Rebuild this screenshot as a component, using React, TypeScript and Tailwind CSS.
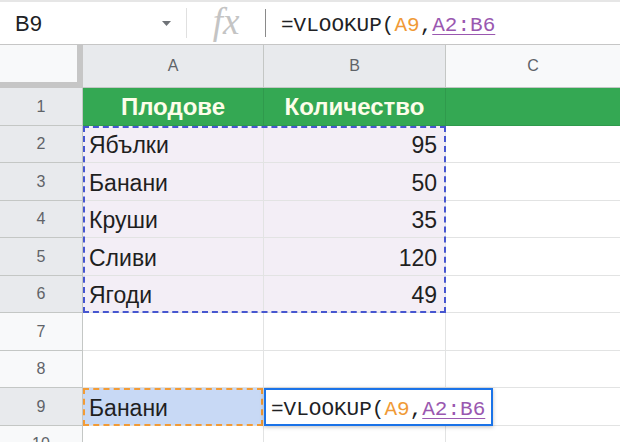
import React from 'react';

// one row of the sheet: number, cell A, cell B
type Row = {
  n: number;
  a?: string;
  b?: string;
  head?: boolean;
  range?: boolean;
  lookup?: boolean;
};

const rows: Row[] = [
  { n: 1, a: 'Плодове', b: 'Количество', head: true },
  { n: 2, a: 'Ябълки', b: '95', range: true },
  { n: 3, a: 'Банани', b: '50', range: true },
  { n: 4, a: 'Круши', b: '35', range: true },
  { n: 5, a: 'Сливи', b: '120', range: true },
  { n: 6, a: 'Ягоди', b: '49', range: true },
  { n: 7 },
  { n: 8 },
  { n: 9, a: 'Банани', lookup: true },
  { n: 10 },
];

// the formula with its coloured references
const Formula = () => (
  <span className="font-['Liberation_Mono',monospace] text-[21px] leading-none text-[#202124] whitespace-nowrap">
    =VLOOKUP(<span className="text-[#f09a36]">A9</span>,
    <span className="text-[#9a58b0] underline decoration-1 underline-offset-[3px]">A2:B6</span>
  </span>
);

const FormulaBar = () => (
  <div className="h-[45px] flex items-center border-t-2 border-[#e6e6e6] border-b border-b-[#c6c6c6] bg-white">
    <div className="w-[186px] flex items-center justify-between pl-[15px] pr-[15px]">
      <span className="text-[22px] text-[#202124]">B9</span>
      <svg width="9" height="5" viewBox="0 0 9 5">
        <path d="M0 0 L9 0 L4.5 5 Z" fill="#6f7378" />
      </svg>
    </div>
    <div className="w-px h-[30px] bg-[#e0e0e0]" />
    <div className="w-[78px] flex items-center justify-center">
      <span className="font-['Liberation_Serif',serif] italic text-[37px] leading-none text-[#c4c4c4] -mt-[4px]">fx</span>
    </div>
    <div className="w-px h-[28px] bg-[#8a8a8a]" />
    <div className="pl-[15px] translate-y-[3px]">
      <Formula />
    </div>
  </div>
);

const ColumnHeader = () => (
  <div className="flex h-[43px] text-[16px] text-[#5f6368]">
    <div className="w-[83px] bg-[#f8f9fa] border-r-[6px] border-b-[6px] border-[#c6c6c6]" />
    <div className="w-[181px] bg-[#e8eaed] border-r border-b border-[#c4c7c5] flex items-center justify-center">A</div>
    <div className="w-[182px] bg-[#e8eaed] border-r border-b border-[#c4c7c5] flex items-center justify-center">B</div>
    <div className="flex-1 bg-[#f8f9fa] border-b border-[#c4c7c5] flex items-center justify-center">C</div>
  </div>
);

const SheetRow = ({ row, i }: { row: Row; i: number }) => {
  const h = i % 2 === 0 ? 'h-[38px]' : 'h-[37px]';
  const marked = row.head || row.range || row.lookup;
  const line = row.head ? 'border-[#2f9a4c]' : 'border-[#e2e3e3]';

  let aBg = 'bg-white';
  if (row.head) aBg = 'bg-[#34a853]';
  else if (row.range) aBg = 'bg-[#f3eef6]';
  else if (row.lookup) aBg = 'bg-[#c8d9f5]';

  const bBg = row.head ? 'bg-[#34a853]' : row.range ? 'bg-[#f3eef6]' : 'bg-white';
  const cBg = row.head ? 'bg-[#34a853]' : 'bg-white';

  return (
    <div className={`flex ${h}`}>
      <div
        className={`w-[83px] shrink-0 flex items-center justify-center text-[16px] text-[#5f6368] border-r border-b border-[#c4c7c5] ${
          marked ? 'bg-[#e8eaed]' : 'bg-[#f8f9fa]'
        }`}
      >
        {row.n}
      </div>

      {/* A */}
      <div
        className={`relative w-[181px] shrink-0 flex items-center border-r border-b ${line} ${aBg} ${
          row.head ? 'justify-center font-bold text-[24px] text-[#fdfde9]' : 'pl-[6px] pt-[3px] text-[23px] text-[#1f1f1f]'
        }`}
      >
        {row.a}
        {row.n === 2 && (
          <div className="absolute left-0 top-0 w-[363px] h-[187px] border-2 border-dashed border-[#4656d0] z-10 pointer-events-none" />
        )}
        {row.lookup && (
          <div className="absolute inset-0 -bottom-px border-2 border-dashed border-[#f29b36] z-10 pointer-events-none" />
        )}
      </div>

      {/* B */}
      <div
        className={`relative w-[182px] shrink-0 flex items-center border-r border-b ${line} ${bBg} ${
          row.head ? 'justify-center font-bold text-[24px] text-[#fdfde9]' : 'justify-end pr-[8px] pt-[3px] text-[23px] text-[#1f1f1f]'
        }`}
      >
        {row.b}
        {row.lookup && (
          <div className="absolute left-0 top-0 w-[229px] h-[38px] bg-white border-2 border-[#1a73e8] shadow-[0_1px_4px_rgba(0,0,0,0.25)] z-20 flex items-center pl-[5px] pt-[5px]">
            <Formula />
          </div>
        )}
      </div>

      {/* C */}
      <div className={`flex-1 border-b ${line} ${cBg}`} />
    </div>
  );
};

const App = () => {
  return (
    <div className="w-[620px] h-[442px] overflow-hidden bg-white font-['Liberation_Sans',Arial,sans-serif]">
      <FormulaBar />
      <ColumnHeader />
      {rows.map((row, i) => (
        <SheetRow key={row.n} row={row} i={i} />
      ))}
    </div>
  );
};

export default App;
